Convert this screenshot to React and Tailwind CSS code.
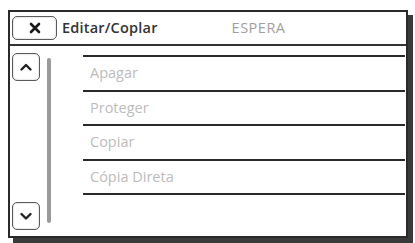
import React from "react";

const font = { fontFamily: '"Open Sans", "Noto Sans", sans-serif' };

function NavBtn({ dir }) {
  return (
    <div className="w-[28px] h-[28px] rounded-[5px] border-[1.5px] border-[#5a5a5a] bg-white shadow-[inset_0_0_2px_#bbb] flex items-center justify-center">
      <svg width="14" height="10" viewBox="0 0 14 10">
        {dir === "up" ? (
          <path d="M2.5 7.5 L7 3 L11.5 7.5" fill="none" stroke="#222" strokeWidth="2.4" strokeLinecap="round" strokeLinejoin="round" />
        ) : (
          <path d="M2.5 3 L7 7.5 L11.5 3" fill="none" stroke="#222" strokeWidth="2.4" strokeLinecap="round" strokeLinejoin="round" />
        )}
      </svg>
    </div>
  );
}

export default function App() {
  const items = ["Apagar", "Proteger", "Copiar", "Cópia Direta"];
  return (
    <div className="w-[415px] h-[243px] bg-white overflow-hidden pl-[8px] pt-[10px]" style={font}>
      <div className="w-[400px] h-[228px] border-2 border-[#2a2a2a] bg-white shadow-[5px_5px_0_#3a3a3a] flex flex-col">
        <div className="h-[34px] border-b-2 border-[#333] flex items-center">
          <div className="ml-[2px] w-[45px] h-[24px] rounded-[5px] border-[1.5px] border-[#5a5a5a] shadow-[inset_0_0_2px_#bbb] flex items-center justify-center">
            <svg width="12" height="12" viewBox="0 0 12 12">
              <path d="M2 2 L10 10 M10 2 L2 10" stroke="#1a1a1a" strokeWidth="2.6" strokeLinecap="round" />
            </svg>
          </div>
          <span className="ml-[5px] text-[14.5px] font-semibold text-[#333] tracking-[0.2px]">Editar/Coplar</span>
          <span className="ml-[74px] text-[14.5px] text-[#a0a0a0] tracking-[0.5px]">ESPERA</span>
        </div>
        <div className="flex-1 flex">
          <div className="w-[73px] flex">
            <div className="ml-[2px] flex flex-col justify-between pt-[7px] pb-[6px]">
              <NavBtn dir="up" />
              <NavBtn dir="down" />
            </div>
            <div className="ml-[7px] mt-[12px] mb-[13px] w-[4px] rounded-full bg-[#9a9a9a]" />
          </div>
          <div className="mt-[9px] w-[322px]">
            <div className="border-t-2 border-[#2a2a2a]">
              {items.map((t) => (
                <div key={t} className="h-[34.5px] border-b-2 border-[#2a2a2a] flex items-center pl-[7px] text-[14.5px] text-[#bcbcbc]">
                  {t}
                </div>
              ))}
            </div>
          </div>
        </div>
      </div>
    </div>
  );
}
